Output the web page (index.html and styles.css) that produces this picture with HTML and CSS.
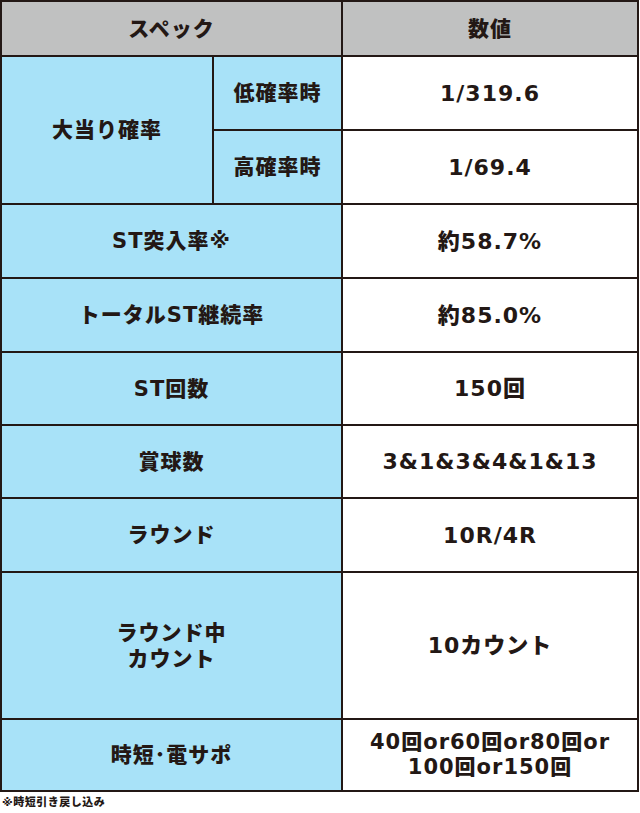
FILE: index.html
```html
<!DOCTYPE html>
<html lang="ja">
<head>
<meta charset="utf-8">
<title>スペック</title>
<link rel="stylesheet" href="styles.css">
</head>
<body>
<div class="spec">
  <div class="cell head span2">スペック</div>
  <div class="cell head">数値</div>

  <div class="cell label rows2">大当り確率</div>
  <div class="cell label">低確率時</div>
  <div class="cell value num">1/319.6</div>
  <div class="cell label">高確率時</div>
  <div class="cell value num">1/69.4</div>

  <div class="cell label span2">ST突入率※</div>
  <div class="cell value num">約58.7%</div>

  <div class="cell label span2">トータルST継続率</div>
  <div class="cell value num">約85.0%</div>

  <div class="cell label span2">ST回数</div>
  <div class="cell value num">150回</div>

  <div class="cell label span2">賞球数</div>
  <div class="cell value num">3&amp;1&amp;3&amp;4&amp;1&amp;13</div>

  <div class="cell label span2">ラウンド</div>
  <div class="cell value num">10R/4R</div>

  <div class="cell label span2">ラウンド中<br>カウント</div>
  <div class="cell value num">10カウント</div>

  <div class="cell label span2">時短･電サポ</div>
  <div class="cell value num tight">40回or60回or80回or<br>100回or150回</div>
</div>
<p class="note">※時短引き戻し込み</p>
</body>
</html>
```

FILE: styles.css
```css
html, body {
  margin: 0;
  padding: 0;
  background: #ffffff;
}

body {
  font-family: "DejaVu Sans", "Noto Sans CJK JP", sans-serif;
  color: #231815;
  font-weight: 900;
}

.spec {
  display: grid;
  grid-template-columns: 210px 127px 294px;
  grid-template-rows: 53px 72px 72px 72px 72px 71px 71px 72px 145px 70px;
  gap: 2px;
  padding: 2px;
  background: #231815;
  width: 639px;
  box-sizing: border-box;
}

.cell {
  display: flex;
  align-items: center;
  justify-content: center;
  text-align: center;
  font-size: 21px;
  line-height: 26px;
  letter-spacing: 1px;
}

.head {
  background: #c0c1c1;
}

.label {
  background: #a8e2f8;
}

.value {
  background: #ffffff;
}

.num {
  font-size: 22px;
  letter-spacing: 1px;
  line-height: 25px;
}

.tight {
  font-size: 21px;
  letter-spacing: 1px;
}

.span2 {
  grid-column: 1 / 3;
}

.rows2 {
  grid-row: 2 / 4;
}

.note {
  margin: 4px 0 0 2px;
  font-size: 11px;
  line-height: 14px;
  letter-spacing: 0.5px;
}
```
